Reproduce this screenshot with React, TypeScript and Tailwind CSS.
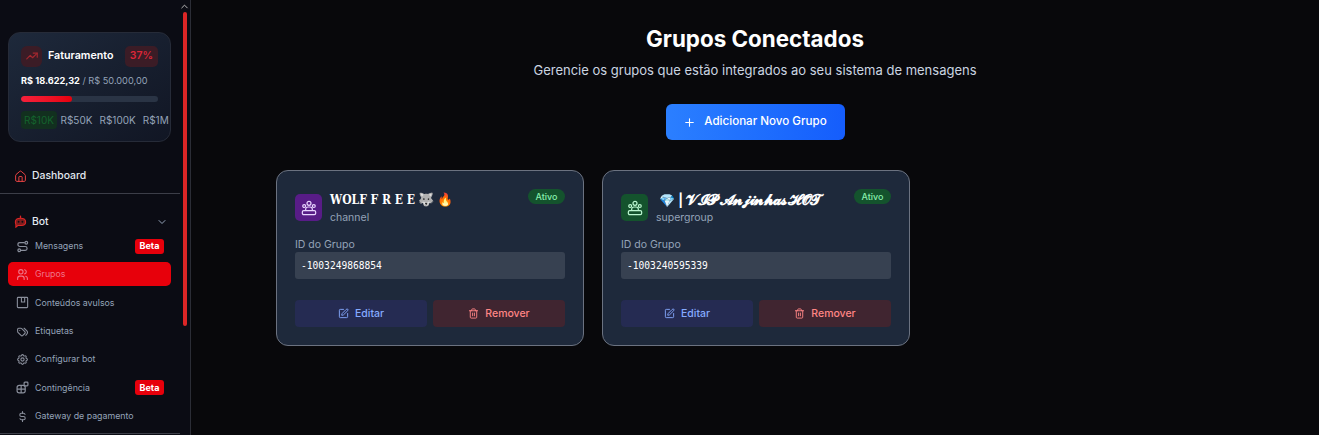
import React from 'react';
import { House, Plus, SquarePen, Trash2 } from 'lucide-react';
import {
  TbChevronDown,
  TbChevronUp,
  TbCurrencyDollar,
  TbSettings,
  TbTags,
  TbTrendingUp,
  TbUsers,
} from 'react-icons/tb';

type IconProps = { className?: string };

type MenuItem = {
  label: string;
  icon: React.ComponentType<IconProps>;
  beta?: boolean;
  active?: boolean;
};

type Group = {
  name: React.ReactNode;
  type: string;
  id: string;
  iconBox: string;
};

const RouteIcon = ({ className }: IconProps) => (
  <svg viewBox="0 0 24 24" fill="none" stroke="currentColor" strokeWidth="2.2" className={className}>
    <path d="M16 5H7a3.5 3.5 0 0 0 0 7h10a3.5 3.5 0 0 1 0 7H9" />
    <circle cx="19" cy="5" r="2.5" />
    <circle cx="6" cy="19" r="2.5" />
  </svg>
);

const ContentIcon = ({ className }: IconProps) => (
  <svg viewBox="0 0 24 24" fill="none" stroke="currentColor" strokeWidth="2" className={className}>
    <rect x="2.500" y="2.500" width="19" height="19" rx="1.500" />
    <path d="M10 3v8h6V3" />
  </svg>
);

const BlocksIcon = ({ className }: IconProps) => (
  <svg viewBox="0 0 24 24" fill="none" stroke="currentColor" strokeWidth="2.200" className={className}>
    <rect x="2" y="8" width="15" height="14" rx="4" />
    <path d="M9.500 8v14M2 15h15" />
    <rect x="15" y="2" width="7" height="7" rx="1.500" />
  </svg>
);

const BotIcon = ({ className }: IconProps) => (
  <svg viewBox="0 0 24 24" className={className}>
    <path d="M12 2v4" stroke="#dc2626" strokeWidth="2.400" strokeLinecap="round" />
    <path d="M12 6c5.500 0 9.500 2.600 9.500 7s-4 6.500-8 6.500H7l-3.500 3v-5C2.800 16 2.500 14.500 2.500 13c0-4.400 4-7 9.500-7z" fill="#7f1d1d" stroke="#dc2626" strokeWidth="2" />
    <circle cx="8.500" cy="12.500" r="1.700" fill="#0b0c14" />
    <circle cx="15.500" cy="12.500" r="1.700" fill="#0b0c14" />
  </svg>
);

const TeamIcon = ({ className }: IconProps) => (
  <svg viewBox="0 0 24 24" fill="none" stroke="currentColor" strokeWidth="1.800" className={className}>
    <circle cx="12" cy="5" r="3" />
    <circle cx="4.800" cy="9" r="2.200" />
    <circle cx="19.200" cy="9" r="2.200" />
    <rect x="2" y="16" width="20" height="6" rx="2" />
    <path d="M7 16v-2a3.500 3.500 0 0 1 3.500-3.500h3A3.500 3.500 0 0 1 17 14v2" />
  </svg>
);

const menuItems: MenuItem[] = [
  { label: 'Mensagens', icon: RouteIcon, beta: true },
  { label: 'Grupos', icon: TbUsers, active: true },
  { label: 'Conteúdos avulsos', icon: ContentIcon },
  { label: 'Etiquetas', icon: TbTags },
  { label: 'Configurar bot', icon: TbSettings },
  { label: 'Contingência', icon: BlocksIcon, beta: true },
  { label: 'Gateway de pagamento', icon: TbCurrencyDollar },
];

const groups: Group[] = [
  {
    name: (
      <>
        <span className="font-['DejaVu_Serif_Condensed','DejaVu_Serif',serif] text-[12px]">𝐖𝐎𝐋𝐅 𝐅 𝐑 𝐄 𝐄</span>
        <span> 🐺 🔥</span>
      </>
    ),
    type: 'channel',
    id: '-1003249868854',
    iconBox: 'bg-[#581c87] text-[#e9d5ff]',
  },
  {
    name: (
      <>
        <span> 💎 | </span>
        <span className="text-[15px] tracking-[-0.9px]">𝓥𝓘𝓟 𝓐𝓷𝓳𝓲𝓷𝓱𝓪𝓼 𝓗𝓞𝓣</span>
      </>
    ),
    type: 'supergroup',
    id: '-1003240595339',
    iconBox: 'bg-[#14532d] text-[#bbf7d0]',
  },
];

const tiers = ['R$10K', 'R$50K', 'R$100K', 'R$1M'];

const Sidebar = () => (
  <aside className="relative w-[191px] h-[435px] shrink-0 overflow-hidden bg-[#0b0c14] border-r border-[#2b2d36]">
    <TbChevronUp className="absolute left-[179px] top-[1px] w-[11px] h-[11px] text-[#c7c7c7]" />
    <div className="absolute left-[183px] top-[12px] w-[4px] h-[314px] rounded-full bg-[#dc2626]" />

    <div className="pt-[32px] pl-[8px] w-[172px]">
      <div className="h-[110px] w-[163px] rounded-[12px] border border-[#262b38] bg-gradient-to-br from-[#1e293b] to-[#111624] pt-[12px] pl-[12px]">
        <div className="flex items-center h-[22px]">
          <div className="w-[21px] h-[21px] rounded-[6px] bg-[#3b1c26] flex items-center justify-center">
            <TbTrendingUp className="w-[14px] h-[14px] text-[#a3272f]" />
          </div>
          <span className="ml-[6px] text-[10.700px] font-semibold text-white">Faturamento</span>
          <span className="ml-auto mr-[12px] h-[21px] w-[33px] rounded-[5px] bg-[#3b1c26] text-[10.500px] font-semibold text-[#dc2638] flex items-center justify-center">37%</span>
        </div>
        <div className="mt-[7px] text-[9.200px] leading-[14px] whitespace-nowrap">
          <span className="font-bold text-white">R$ 18.622,32</span>
          <span className="text-[#94a3b8]"> / R$ 50.000,00</span>
        </div>
        <div className="mt-[8px] w-[137px] h-[6px] rounded-full bg-[#2a3445] overflow-hidden">
          <div className="h-full w-[37%] rounded-full bg-gradient-to-r from-[#f5203a] to-[#e7000b]" />
        </div>
        <div className="mt-[9px] flex items-center text-[10px] text-[#94a3b8] whitespace-nowrap">
          {tiers.map((tier, index) => (
            <span
              key={tier}
              className={index === 0 ? 'shrink-0 w-[36px] text-center h-[18px] leading-[18px] rounded-[4px] bg-[#12301f] text-[#14622d]' : 'shrink-0 px-[3.500px] h-[18px] leading-[18px]'}
            >
              {tier}
            </span>
          ))}
        </div>
      </div>
    </div>

    <div className="mt-[24px] pl-[14px] flex items-center h-[20px]">
      <House strokeWidth={1.800} className="w-[13px] h-[13px] text-[#ef4444]" />
      <span className="ml-[5px] text-[10.400px] font-medium text-[#e2e8f0]">Dashboard</span>
    </div>
    <div className="mt-[7px] w-[180px] h-px bg-[#3c3e48]" />

    <div className="mt-[18px] pl-[14px] pr-[22px] flex items-center justify-between h-[20px]">
      <div className="flex items-center">
        <BotIcon className="w-[13px] h-[13px]" />
        <span className="ml-[5px] text-[10.400px] font-medium text-[#e2e8f0]">Bot</span>
      </div>
      <TbChevronDown className="w-[12px] h-[12px] text-[#94a3b8]" />
    </div>

    <nav className="mt-[2px] pl-[8px] w-[171px]">
      {menuItems.map((item) => (
        <div
          key={item.label}
          className={`flex items-center h-[24px] mb-[4.400px] pl-[8px] pr-[7px] rounded-[5px] ${item.active ? 'bg-[#e7000b] text-[#f0758a]' : 'text-[#94a3b8]'}`}
        >
          <item.icon className={`w-[13px] h-[13px] shrink-0 ${item.active ? 'text-[#f0758a]' : 'text-[#8a8f9c]'}`} />
          <span className="ml-[6px] -mt-[1px] text-[8.800px] whitespace-nowrap">{item.label}</span>
          {item.beta && (
            <span className="ml-auto h-[15px] w-[29px] rounded-[3px] bg-[#e7000b] text-[9px] font-bold text-white flex items-center justify-center">Beta</span>
          )}
        </div>
      ))}
    </nav>
    <div className="mt-[2px] w-[180px] h-px bg-[#3c3e48]" />
  </aside>
);

const GroupCard = ({ group }: { group: Group }) => (
  <div className="h-[176px] rounded-[12px] border border-[#6b7280] bg-[#1e293b] px-[18px] pt-[18px]">
    <div className="flex items-start justify-between h-[40px]">
      <div className="flex items-start gap-[8px] pt-[5px]">
        <div className={`w-[27px] h-[27px] rounded-[5px] flex items-center justify-center ${group.iconBox}`}>
          <TeamIcon className="w-[16px] h-[16px]" />
        </div>
        <div className="-mt-[2px]">
          <div className="h-[15px] leading-[15px] text-[13px] font-bold text-white whitespace-pre">{group.name}</div>
          <div className="mt-[4px] text-[10.500px] leading-[14px] text-[#94a3b8]">{group.type}</div>
        </div>
      </div>
      <span className="h-[15px] w-[37px] rounded-full bg-[#14532d] text-[9px] font-medium text-[#86efac] flex items-center justify-center">Ativo</span>
    </div>
    <div className="mt-[9px] text-[10.500px] leading-[14px] text-[#94a3b8]">ID do Grupo</div>
    <div className="h-[27px] rounded-[3px] bg-[#374151] pl-[6px] pt-[1px] flex items-center font-['DejaVu_Sans_Mono',monospace] text-[9.600px] font-medium text-white">{group.id}</div>
    <div className="mt-[21px] grid grid-cols-2 gap-[6px]">
      <button className="h-[27px] rounded-[4px] bg-[#252b52] text-[#85aaff] text-[10.500px] font-medium flex items-center justify-center gap-[6px]">
        <SquarePen className="w-[11px] h-[11px]" />
        Editar
      </button>
      <button className="h-[27px] rounded-[4px] bg-[#402530] text-[#ff8585] text-[10.500px] font-medium flex items-center justify-center gap-[6px]">
        <Trash2 className="w-[11px] h-[11px]" />
        Remover
      </button>
    </div>
  </div>
);

export default function App() {
  return (
    <div className="flex w-[1319px] h-[435px] overflow-hidden bg-[#08080b] font-['Inter',sans-serif]">
      <Sidebar />
      <main className="flex-1 flex flex-col items-center pt-[24px]">
        <h1 className="text-[22.400px] leading-[30px] font-bold text-white">Grupos Conectados</h1>
        <p className="mt-[6px] text-[13px] leading-[20px] text-[#cbd5e1]">Gerencie os grupos que estão integrados ao seu sistema de mensagens</p>
        <button className="mt-[24px] w-[179px] h-[36px] rounded-[6px] bg-gradient-to-r from-[#2b7fff] to-[#155dfc] text-white text-[11.600px] font-medium flex items-center justify-center gap-[8px]">
          <Plus className="w-[13px] h-[13px]" />
          Adicionar Novo Grupo
        </button>
        <div className="mt-[30px] w-[958px] grid grid-cols-[308px_308px] gap-[18px]">
          {groups.map((group) => (
            <GroupCard key={group.id} group={group} />
          ))}
        </div>
      </main>
    </div>
  );
}
